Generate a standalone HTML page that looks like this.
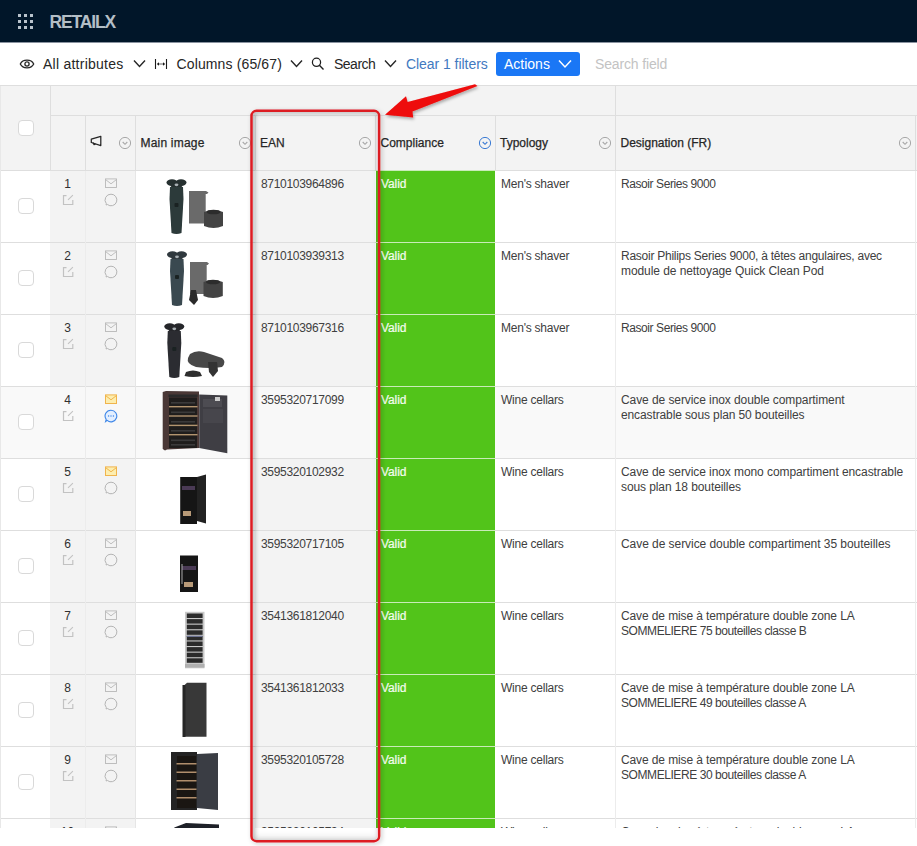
<!DOCTYPE html>
<html><head><meta charset="utf-8">
<style>
*{box-sizing:border-box;margin:0;padding:0}
html,body{width:917px;height:846px;overflow:hidden;background:#fff;font-family:"Liberation Sans",sans-serif;color:#3a3a3a}
.a{position:absolute}
#nav{left:0;top:0;width:917px;height:42px;background:#011629}
.dot{position:absolute;width:3px;height:3px;background:#b9c3cc}
#brand{left:49.5px;top:12px;font-size:17.5px;font-weight:bold;color:#b3bec6;letter-spacing:-1.15px;line-height:20px}
#tb{left:0;top:43px;width:917px;height:42px;background:#fff}
.tt{position:absolute;top:56px;font-size:14px;line-height:16px;color:#262626;white-space:nowrap}
#actions{left:496px;top:52px;width:84px;height:24px;background:#1a77f5;border-radius:3px}
.hdr{background:#f3f3f3}
.line{position:absolute;background:#dedede}
.ht{position:absolute;font-size:12px;line-height:15px;color:#262626;-webkit-text-stroke:0.25px #262626;white-space:nowrap}
.bt{position:absolute;font-size:12px;line-height:15px;color:#404040;white-space:nowrap}
.cb{position:absolute;width:16px;height:16px;border:1px solid #d9d9d9;border-radius:4px;background:#fff}
</style></head><body>
<div id="nav" class="a">
  <div class="dot" style="left:18px;top:14px"></div><div class="dot" style="left:24px;top:14px"></div><div class="dot" style="left:30px;top:14px"></div>
  <div class="dot" style="left:18px;top:20px"></div><div class="dot" style="left:24px;top:20px"></div><div class="dot" style="left:30px;top:20px"></div>
  <div class="dot" style="left:18px;top:26px"></div><div class="dot" style="left:24px;top:26px"></div><div class="dot" style="left:30px;top:26px"></div>
  <div id="brand" class="a">RETAILX</div>
</div>
<div id="tb" class="a"></div>
<div class="a" style="left:0;top:42px;width:917px;height:1px;background:#8a93a0"></div>

<!-- eye -->
<svg class="a" style="left:19px;top:58px" width="16" height="12" viewBox="0 0 16 12"><path d="M1.3 6 C3.8 0.9 12.2 0.9 14.7 6 C12.2 11.1 3.8 11.1 1.3 6Z" fill="none" stroke="#262626" stroke-width="1.3"/><circle cx="8" cy="6" r="2.1" fill="none" stroke="#262626" stroke-width="1.3"/></svg>
<div class="tt" style="left:43px;letter-spacing:0.25px">All attributes</div>
<svg class="a" style="left:133px;top:59px" width="13" height="9" viewBox="0 0 13 9"><path d="M1 1.5 L6.5 7.5 L12 1.5" fill="none" stroke="#262626" stroke-width="1.4"/></svg>
<!-- columns icon -->
<svg class="a" style="left:154px;top:57px" width="14" height="14" viewBox="0 0 14 14"><path d="M1.5 2 V12 M12.5 2 V12" fill="none" stroke="#1a1a1a" stroke-width="1.1"/><path d="M4.5 7 H9.5" stroke="#666" stroke-width="1"/><path d="M2.8 7 L5 5.2 V8.8Z M11.2 7 L9 5.2 V8.8Z" fill="#1a1a1a"/></svg>
<div class="tt" style="left:176.5px;letter-spacing:0.13px">Columns (65/67)</div>
<svg class="a" style="left:290px;top:59px" width="13" height="9" viewBox="0 0 13 9"><path d="M1 1.5 L6.5 7.5 L12 1.5" fill="none" stroke="#262626" stroke-width="1.4"/></svg>
<!-- search icon -->
<svg class="a" style="left:311px;top:56px" width="14" height="15" viewBox="0 0 14 15"><circle cx="5.5" cy="6.3" r="4.1" fill="none" stroke="#1e1e1e" stroke-width="1.25"/><path d="M8.4 9.3 L12.5 13.5" stroke="#1e1e1e" stroke-width="1.35"/></svg>
<div class="tt" style="left:334px;letter-spacing:-0.5px">Search</div>
<svg class="a" style="left:384px;top:59px" width="13" height="9" viewBox="0 0 13 9"><path d="M1 1.5 L6.5 7.5 L12 1.5" fill="none" stroke="#262626" stroke-width="1.4"/></svg>
<div class="tt" style="left:406px;color:#4279bf;letter-spacing:-0.05px">Clear 1 filters</div>
<div id="actions" class="a"></div>
<div class="tt" style="left:504px;color:#fff">Actions</div>
<svg class="a" style="left:558px;top:59px" width="14" height="10" viewBox="0 0 14 10"><path d="M1 1.5 L7 8 L13 1.5" fill="none" stroke="#fff" stroke-width="1.5"/></svg>
<div class="tt" style="left:595px;color:#c3c3c3;letter-spacing:-0.15px">Search field</div>

<!-- TABLE -->
<div class="a hdr" style="left:0;top:86px;width:917px;height:84px"></div>
<div class="line" style="left:0;top:85px;width:917px;height:1px"></div>
<div class="line" style="left:50px;top:115px;width:867px;height:1px"></div>
<div class="line" style="left:50px;top:85px;width:1px;height:85px"></div>
<div class="line" style="left:615px;top:85px;width:1px;height:85px"></div>
<div class="line" style="left:85px;top:115px;width:1px;height:55px"></div>
<div class="line" style="left:135px;top:115px;width:1px;height:55px"></div>
<div class="line" style="left:255px;top:115px;width:1px;height:55px"></div>
<div class="line" style="left:375px;top:115px;width:1px;height:55px"></div>
<div class="line" style="left:495px;top:115px;width:1px;height:55px"></div>
<div class="line" style="left:915px;top:115px;width:1px;height:55px"></div>
<div class="cb" style="left:18px;top:120px"></div>
<svg class="a" style="left:89px;top:135px" width="14" height="12" viewBox="0 0 14 12"><path d="M2.3 4.1 L11.8 1.3 V10.6 L2.3 7.5 Z" fill="none" stroke="#262626" stroke-width="1.25" stroke-linejoin="round"/><path d="M4 7.6 L4.9 9.6 L6.6 9.1" fill="none" stroke="#262626" stroke-width="1.1" stroke-linejoin="round"/></svg>
<svg class="a" style="left:118px;top:136px" width="14" height="14" viewBox="0 0 14 14"><circle cx="7" cy="7" r="5.6" fill="none" stroke="#a8a8a8" stroke-width="1"/><path d="M4.7 6 L7 8.3 L9.3 6" fill="none" stroke="#a8a8a8" stroke-width="1.1"/></svg>
<svg class="a" style="left:238px;top:136px" width="14" height="14" viewBox="0 0 14 14"><circle cx="7" cy="7" r="5.6" fill="none" stroke="#a8a8a8" stroke-width="1"/><path d="M4.7 6 L7 8.3 L9.3 6" fill="none" stroke="#a8a8a8" stroke-width="1.1"/></svg>
<svg class="a" style="left:358px;top:136px" width="14" height="14" viewBox="0 0 14 14"><circle cx="7" cy="7" r="5.6" fill="none" stroke="#a8a8a8" stroke-width="1"/><path d="M4.7 6 L7 8.3 L9.3 6" fill="none" stroke="#a8a8a8" stroke-width="1.1"/></svg>
<svg class="a" style="left:598px;top:136px" width="14" height="14" viewBox="0 0 14 14"><circle cx="7" cy="7" r="5.6" fill="none" stroke="#a8a8a8" stroke-width="1"/><path d="M4.7 6 L7 8.3 L9.3 6" fill="none" stroke="#a8a8a8" stroke-width="1.1"/></svg>
<svg class="a" style="left:898px;top:136px" width="14" height="14" viewBox="0 0 14 14"><circle cx="7" cy="7" r="5.6" fill="none" stroke="#a8a8a8" stroke-width="1"/><path d="M4.7 6 L7 8.3 L9.3 6" fill="none" stroke="#a8a8a8" stroke-width="1.1"/></svg>
<svg class="a" style="left:478px;top:136px" width="14" height="14" viewBox="0 0 14 14"><circle cx="7" cy="7" r="5.6" fill="none" stroke="#3b7bd4" stroke-width="1"/><path d="M4.7 6 L7 8.3 L9.3 6" fill="none" stroke="#3b7bd4" stroke-width="1.1"/></svg>
<div class="ht" style="left:140.5px;top:136px;letter-spacing:0.2px">Main image</div>
<div class="ht" style="left:260px;top:136px;letter-spacing:0px">EAN</div>
<div class="ht" style="left:380.5px;top:136px;letter-spacing:0px">Compliance</div>
<div class="ht" style="left:500px;top:136px;letter-spacing:0px">Typology</div>
<div class="ht" style="left:620.5px;top:136px;letter-spacing:0px">Designation (FR)</div>
<div class="a" style="left:50px;top:171px;width:85px;height:657px;background:#f3f3f3"></div>
<div class="a" style="left:255px;top:171px;width:120px;height:657px;background:#f3f3f3"></div>
<div class="a" style="left:376px;top:171px;width:119px;height:71px;background:#52c41a"></div>
<div class="a" style="left:376px;top:243px;width:119px;height:71px;background:#52c41a"></div>
<div class="a" style="left:376px;top:315px;width:119px;height:71px;background:#52c41a"></div>
<div class="a" style="left:0;top:387px;width:50px;height:71px;background:#f9f9f9"></div>
<div class="a" style="left:50px;top:387px;width:85px;height:71px;background:#f8f8f8"></div>
<div class="a" style="left:135px;top:387px;width:120px;height:71px;background:#f9f9f9"></div>
<div class="a" style="left:495px;top:387px;width:422px;height:71px;background:#f9f9f9"></div>
<div class="a" style="left:255px;top:387px;width:120px;height:71px;background:#f8f8f8"></div>
<div class="a" style="left:376px;top:387px;width:119px;height:71px;background:#52c41a"></div>
<div class="a" style="left:376px;top:459px;width:119px;height:71px;background:#52c41a"></div>
<div class="a" style="left:376px;top:531px;width:119px;height:71px;background:#52c41a"></div>
<div class="a" style="left:376px;top:603px;width:119px;height:71px;background:#52c41a"></div>
<div class="a" style="left:376px;top:675px;width:119px;height:71px;background:#52c41a"></div>
<div class="a" style="left:376px;top:747px;width:119px;height:71px;background:#52c41a"></div>
<div class="a" style="left:376px;top:819px;width:119px;height:71px;background:#52c41a"></div>
<div class="line" style="left:0;top:170px;width:917px;height:1px;background:#dedede"></div>
<div class="a" style="left:375px;top:170px;width:120px;height:1px;background:#c9ebb8"></div>
<div class="line" style="left:0;top:242px;width:917px;height:1px;background:#dedede"></div>
<div class="a" style="left:375px;top:242px;width:120px;height:1px;background:#c9ebb8"></div>
<div class="line" style="left:0;top:314px;width:917px;height:1px;background:#dedede"></div>
<div class="a" style="left:375px;top:314px;width:120px;height:1px;background:#c9ebb8"></div>
<div class="line" style="left:0;top:386px;width:917px;height:1px;background:#dedede"></div>
<div class="a" style="left:375px;top:386px;width:120px;height:1px;background:#c9ebb8"></div>
<div class="line" style="left:0;top:458px;width:917px;height:1px;background:#dedede"></div>
<div class="a" style="left:375px;top:458px;width:120px;height:1px;background:#c9ebb8"></div>
<div class="line" style="left:0;top:530px;width:917px;height:1px;background:#dedede"></div>
<div class="a" style="left:375px;top:530px;width:120px;height:1px;background:#c9ebb8"></div>
<div class="line" style="left:0;top:602px;width:917px;height:1px;background:#dedede"></div>
<div class="a" style="left:375px;top:602px;width:120px;height:1px;background:#c9ebb8"></div>
<div class="line" style="left:0;top:674px;width:917px;height:1px;background:#dedede"></div>
<div class="a" style="left:375px;top:674px;width:120px;height:1px;background:#c9ebb8"></div>
<div class="line" style="left:0;top:746px;width:917px;height:1px;background:#dedede"></div>
<div class="a" style="left:375px;top:746px;width:120px;height:1px;background:#c9ebb8"></div>
<div class="line" style="left:0;top:818px;width:917px;height:1px;background:#dedede"></div>
<div class="a" style="left:375px;top:818px;width:120px;height:1px;background:#c9ebb8"></div>
<div class="line" style="left:0;top:86px;width:1px;height:742px;background:#e8e8e8"></div>
<div class="line" style="left:85px;top:171px;width:1px;height:657px;background:#ececec"></div>
<div class="line" style="left:615px;top:171px;width:1px;height:657px;background:#ececec"></div>
<div class="line" style="left:915px;top:171px;width:1px;height:657px;background:#ececec"></div>
<div class="line" style="left:135px;top:171px;width:1px;height:657px;background:#e6e6e6"></div>
<div class="cb" style="left:18px;top:198px"></div>
<div class="bt" style="left:50px;width:35px;text-align:center;top:177px;color:#303030">1</div>
<svg class="a" style="left:62px;top:194px" width="12" height="12" viewBox="0 0 12 12"><path d="M4.5 1.6 H1.5 V10.5 H10.8 V6" fill="none" stroke="#c2c2c2" stroke-width="1.2"/><path d="M6 5.8 L10.9 1.2" stroke="#c2c2c2" stroke-width="1.1"/></svg>
<svg class="a" style="left:104px;top:178px" width="14" height="11" viewBox="0 0 14 11"><rect x="1.5" y="0.9" width="11" height="8.6" fill="none" stroke="#b8b8b8" stroke-width="0.9"/><path d="M1.5 1.5 L7 5.8 L12.5 1.5" fill="none" stroke="#b8b8b8" stroke-width="0.9"/></svg>
<svg class="a" style="left:104px;top:192.5px" width="14" height="14" viewBox="0 0 14 14"><path d="M7 1.2 A5.8 5.8 0 1 1 3.4 11.5 L2.1 12 L2.3 10.6 A5.8 5.8 0 0 1 7 1.2Z" fill="none" stroke="#b4b4b4" stroke-width="1"/></svg>
<div class="bt" style="left:261px;top:177px;letter-spacing:-0.3px">8710103964896</div>
<div class="bt" style="left:381px;top:177px;color:#f5fcf0;letter-spacing:-0.1px;-webkit-text-stroke:0.2px #f5fcf0">Valid</div>
<div class="bt" style="left:501px;top:177px;letter-spacing:-0.23px">Men's shaver</div>
<div class="bt" style="left:621px;top:177px;letter-spacing:-0.42px">Rasoir Series 9000</div>
<svg class="a" style="left:0;top:0" width="917" height="846" viewBox="0 0 917 846"><ellipse cx="172.0" cy="182.6" rx="5.5" ry="3.4" fill="#263030"/><ellipse cx="181.0" cy="182.6" rx="5.5" ry="3.4" fill="#263030"/><ellipse cx="176.5" cy="185" rx="6" ry="3.8" fill="#263030"/><ellipse cx="176.5" cy="184.8" rx="1.9" ry="1.4" fill="#a9b0b4"/><path d="M170.0 187 L183.0 187 L183.5 199 L181.5 233 Q176.5 235 171.5 233 L169.5 199 Z" fill="#2c3a3a"/><rect x="174.5" y="203" width="4" height="4" rx="1" fill="#1a2222"/><path d="M189 191 H206 L208.5 192.5 L207 194 H205.7 V223.6 H189 Z" fill="#6a6a6a"/><path d="M204 212 Q213.5 208 223 212 V226 Q213.5 230 204 226 Z" fill="#434343"/><ellipse cx="213.5" cy="212" rx="7" ry="2.3" fill="#2c2c2c"/></svg>
<div class="cb" style="left:18px;top:270px"></div>
<div class="bt" style="left:50px;width:35px;text-align:center;top:249px;color:#303030">2</div>
<svg class="a" style="left:62px;top:266px" width="12" height="12" viewBox="0 0 12 12"><path d="M4.5 1.6 H1.5 V10.5 H10.8 V6" fill="none" stroke="#c2c2c2" stroke-width="1.2"/><path d="M6 5.8 L10.9 1.2" stroke="#c2c2c2" stroke-width="1.1"/></svg>
<svg class="a" style="left:104px;top:250px" width="14" height="11" viewBox="0 0 14 11"><rect x="1.5" y="0.9" width="11" height="8.6" fill="none" stroke="#b8b8b8" stroke-width="0.9"/><path d="M1.5 1.5 L7 5.8 L12.5 1.5" fill="none" stroke="#b8b8b8" stroke-width="0.9"/></svg>
<svg class="a" style="left:104px;top:264.5px" width="14" height="14" viewBox="0 0 14 14"><path d="M7 1.2 A5.8 5.8 0 1 1 3.4 11.5 L2.1 12 L2.3 10.6 A5.8 5.8 0 0 1 7 1.2Z" fill="none" stroke="#b4b4b4" stroke-width="1"/></svg>
<div class="bt" style="left:261px;top:249px;letter-spacing:-0.3px">8710103939313</div>
<div class="bt" style="left:381px;top:249px;color:#f5fcf0;letter-spacing:-0.1px;-webkit-text-stroke:0.2px #f5fcf0">Valid</div>
<div class="bt" style="left:501px;top:249px;letter-spacing:-0.23px">Men's shaver</div>
<div class="bt" style="left:621px;top:249px;letter-spacing:-0.256px">Rasoir Philips Series 9000, à têtes angulaires, avec</div>
<div class="bt" style="left:621px;top:264px;letter-spacing:-0.073px">module de nettoyage Quick Clean Pod</div>
<svg class="a" style="left:0;top:0" width="917" height="846" viewBox="0 0 917 846"><ellipse cx="172.5" cy="254.6" rx="5.5" ry="3.4" fill="#30393e"/><ellipse cx="181.5" cy="254.6" rx="5.5" ry="3.4" fill="#30393e"/><ellipse cx="177" cy="257" rx="6" ry="3.8" fill="#30393e"/><ellipse cx="177" cy="256.8" rx="1.9" ry="1.4" fill="#a9b0b4"/><path d="M170.5 259 L183.5 259 L184 271 L182 305 Q177 307 172 305 L170 271 Z" fill="#3a4950"/><rect x="175" y="275" width="4" height="4" rx="1" fill="#1a2222"/><path d="M190 262 H207 L209 263.5 L207.5 265 H206.7 V294 H190 Z" fill="#6a6a6a"/><path d="M203.5 282 Q213 278 222.8 282 V296 Q213 300 203.5 296 Z" fill="#434343"/><ellipse cx="213" cy="282" rx="7" ry="2.3" fill="#2c2c2c"/><path d="M191 290 H196 L198 300 L194 305 L189 300 Z" fill="#2a2a2a"/></svg>
<div class="cb" style="left:18px;top:342px"></div>
<div class="bt" style="left:50px;width:35px;text-align:center;top:321px;color:#303030">3</div>
<svg class="a" style="left:62px;top:338px" width="12" height="12" viewBox="0 0 12 12"><path d="M4.5 1.6 H1.5 V10.5 H10.8 V6" fill="none" stroke="#c2c2c2" stroke-width="1.2"/><path d="M6 5.8 L10.9 1.2" stroke="#c2c2c2" stroke-width="1.1"/></svg>
<svg class="a" style="left:104px;top:322px" width="14" height="11" viewBox="0 0 14 11"><rect x="1.5" y="0.9" width="11" height="8.6" fill="none" stroke="#b8b8b8" stroke-width="0.9"/><path d="M1.5 1.5 L7 5.8 L12.5 1.5" fill="none" stroke="#b8b8b8" stroke-width="0.9"/></svg>
<svg class="a" style="left:104px;top:336.5px" width="14" height="14" viewBox="0 0 14 14"><path d="M7 1.2 A5.8 5.8 0 1 1 3.4 11.5 L2.1 12 L2.3 10.6 A5.8 5.8 0 0 1 7 1.2Z" fill="none" stroke="#b4b4b4" stroke-width="1"/></svg>
<div class="bt" style="left:261px;top:321px;letter-spacing:-0.3px">8710103967316</div>
<div class="bt" style="left:381px;top:321px;color:#f5fcf0;letter-spacing:-0.1px;-webkit-text-stroke:0.2px #f5fcf0">Valid</div>
<div class="bt" style="left:501px;top:321px;letter-spacing:-0.23px">Men's shaver</div>
<div class="bt" style="left:621px;top:321px;letter-spacing:-0.42px">Rasoir Series 9000</div>
<svg class="a" style="left:0;top:0" width="917" height="846" viewBox="0 0 917 846"><ellipse cx="169.8" cy="326.6" rx="5.5" ry="3.4" fill="#25262a"/><ellipse cx="178.8" cy="326.6" rx="5.5" ry="3.4" fill="#25262a"/><ellipse cx="174.3" cy="329" rx="6" ry="3.8" fill="#25262a"/><ellipse cx="174.3" cy="328.8" rx="1.9" ry="1.4" fill="#a9b0b4"/><path d="M167.8 331 L180.8 331 L181.3 343 L179.3 377 Q174.3 379 169.3 377 L167.3 343 Z" fill="#2b2c31"/><rect x="172.3" y="347" width="4" height="4" rx="1" fill="#1a2222"/><path d="M190 354 Q196 350 204 352 L222 358 Q227 362 222 367 Q210 369 196 367 Q186 364 188 358Z" fill="#484848"/><path d="M208 362 H217 L218 371 L213 377 L209 372Z" fill="#333"/><path d="M186 372 Q193 369 200 372 L202 376 Q193 378 184.5 376Z" fill="#2e2e2e"/></svg>
<div class="cb" style="left:18px;top:414px"></div>
<div class="bt" style="left:50px;width:35px;text-align:center;top:393px;color:#303030">4</div>
<svg class="a" style="left:62px;top:410px" width="12" height="12" viewBox="0 0 12 12"><path d="M4.5 1.6 H1.5 V10.5 H10.8 V6" fill="none" stroke="#c2c2c2" stroke-width="1.2"/><path d="M6 5.8 L10.9 1.2" stroke="#c2c2c2" stroke-width="1.1"/></svg>
<svg class="a" style="left:104px;top:394px" width="14" height="11" viewBox="0 0 14 11"><rect x="1.5" y="0.9" width="11" height="8.6" fill="#fdeeb0" stroke="#f0b44c" stroke-width="1"/><path d="M1.5 1.5 L7 5.8 L12.5 1.5" fill="none" stroke="#f0b44c" stroke-width="1"/></svg>
<svg class="a" style="left:104px;top:408.5px" width="14" height="14" viewBox="0 0 14 14"><path d="M7 1.2 A5.8 5.8 0 1 1 3.2 11.4 L1.6 12.6 L2.2 10.4 A5.8 5.8 0 0 1 7 1.2Z" fill="#e3efff" stroke="#3d86e8" stroke-width="1.1"/><circle cx="4.6" cy="7" r="0.7" fill="#3d86e8"/><circle cx="7" cy="7" r="0.7" fill="#3d86e8"/><circle cx="9.4" cy="7" r="0.7" fill="#3d86e8"/></svg>
<div class="bt" style="left:261px;top:393px;letter-spacing:-0.3px">3595320717099</div>
<div class="bt" style="left:381px;top:393px;color:#f5fcf0;letter-spacing:-0.1px;-webkit-text-stroke:0.2px #f5fcf0">Valid</div>
<div class="bt" style="left:501px;top:393px;letter-spacing:-0.23px">Wine cellars</div>
<div class="bt" style="left:621px;top:393px;letter-spacing:-0.081px">Cave de service inox double compartiment</div>
<div class="bt" style="left:621px;top:408px;letter-spacing:-0.116px">encastrable sous plan 50 bouteilles</div>
<svg class="a" style="left:0;top:0" width="917" height="846" viewBox="0 0 917 846"><path d="M162.7 392 L166 391 L199 391.5 L199 448 L167 449.5 L165 450.6 L162.7 449Z" fill="#4a3836"/><rect x="168.5" y="394.5" width="29" height="2.5" fill="#2a2a2a"/><rect x="169" y="397.5" width="28" height="50.5" fill="#1f1d1c"/><rect x="169" y="406" width="28.5" height="1.4" fill="#b3956f"/><rect x="169" y="415.3" width="28.5" height="1.4" fill="#b3956f"/><rect x="169" y="424.7" width="28.5" height="1.4" fill="#b3956f"/><rect x="169" y="434" width="28.5" height="1.4" fill="#b3956f"/><rect x="171" y="402" width="24" height="1.6" fill="#3b3a3a"/><rect x="171" y="411.5" width="24" height="1.6" fill="#3b3a3a"/><rect x="171" y="421" width="24" height="1.6" fill="#3b3a3a"/><rect x="171" y="430" width="24" height="1.6" fill="#3b3a3a"/><rect x="171" y="439.5" width="24" height="1.6" fill="#3b3a3a"/><rect x="171" y="444" width="24" height="1.6" fill="#3b3a3a"/><path d="M199.2 394.5 L227.3 395.5 L227.3 453.2 L199.2 448Z" fill="#3f3e44"/><rect x="203" y="399" width="19" height="8" fill="#4d4c52"/><rect x="215" y="397" width="5" height="4" fill="#ccc"/><rect x="203" y="409" width="20" height="14" fill="#47464c"/></svg>
<div class="cb" style="left:18px;top:486px"></div>
<div class="bt" style="left:50px;width:35px;text-align:center;top:465px;color:#303030">5</div>
<svg class="a" style="left:62px;top:482px" width="12" height="12" viewBox="0 0 12 12"><path d="M4.5 1.6 H1.5 V10.5 H10.8 V6" fill="none" stroke="#c2c2c2" stroke-width="1.2"/><path d="M6 5.8 L10.9 1.2" stroke="#c2c2c2" stroke-width="1.1"/></svg>
<svg class="a" style="left:104px;top:466px" width="14" height="11" viewBox="0 0 14 11"><rect x="1.5" y="0.9" width="11" height="8.6" fill="#fdeeb0" stroke="#f0b44c" stroke-width="1"/><path d="M1.5 1.5 L7 5.8 L12.5 1.5" fill="none" stroke="#f0b44c" stroke-width="1"/></svg>
<svg class="a" style="left:104px;top:480.5px" width="14" height="14" viewBox="0 0 14 14"><path d="M7 1.2 A5.8 5.8 0 1 1 3.4 11.5 L2.1 12 L2.3 10.6 A5.8 5.8 0 0 1 7 1.2Z" fill="none" stroke="#b4b4b4" stroke-width="1"/></svg>
<div class="bt" style="left:261px;top:465px;letter-spacing:-0.3px">3595320102932</div>
<div class="bt" style="left:381px;top:465px;color:#f5fcf0;letter-spacing:-0.1px;-webkit-text-stroke:0.2px #f5fcf0">Valid</div>
<div class="bt" style="left:501px;top:465px;letter-spacing:-0.23px">Wine cellars</div>
<div class="bt" style="left:621px;top:465px;letter-spacing:-0.081px">Cave de service inox mono compartiment encastrable</div>
<div class="bt" style="left:621px;top:480px;letter-spacing:-0.095px">sous plan 18 bouteilles</div>
<svg class="a" style="left:0;top:0" width="917" height="846" viewBox="0 0 917 846"><rect x="180.2" y="477" width="16.8" height="47" fill="#151515"/><rect x="182" y="486" width="13" height="4" fill="#4a3a55"/><rect x="183" y="511" width="8" height="5" fill="#b89a78"/><path d="M197 477 L206 474.5 L206 523.5 L197 521Z" fill="#222"/></svg>
<div class="cb" style="left:18px;top:558px"></div>
<div class="bt" style="left:50px;width:35px;text-align:center;top:537px;color:#303030">6</div>
<svg class="a" style="left:62px;top:554px" width="12" height="12" viewBox="0 0 12 12"><path d="M4.5 1.6 H1.5 V10.5 H10.8 V6" fill="none" stroke="#c2c2c2" stroke-width="1.2"/><path d="M6 5.8 L10.9 1.2" stroke="#c2c2c2" stroke-width="1.1"/></svg>
<svg class="a" style="left:104px;top:538px" width="14" height="11" viewBox="0 0 14 11"><rect x="1.5" y="0.9" width="11" height="8.6" fill="none" stroke="#b8b8b8" stroke-width="0.9"/><path d="M1.5 1.5 L7 5.8 L12.5 1.5" fill="none" stroke="#b8b8b8" stroke-width="0.9"/></svg>
<svg class="a" style="left:104px;top:552.5px" width="14" height="14" viewBox="0 0 14 14"><path d="M7 1.2 A5.8 5.8 0 1 1 3.4 11.5 L2.1 12 L2.3 10.6 A5.8 5.8 0 0 1 7 1.2Z" fill="none" stroke="#b4b4b4" stroke-width="1"/></svg>
<div class="bt" style="left:261px;top:537px;letter-spacing:-0.3px">3595320717105</div>
<div class="bt" style="left:381px;top:537px;color:#f5fcf0;letter-spacing:-0.1px;-webkit-text-stroke:0.2px #f5fcf0">Valid</div>
<div class="bt" style="left:501px;top:537px;letter-spacing:-0.23px">Wine cellars</div>
<div class="bt" style="left:621px;top:537px;letter-spacing:-0.055px">Cave de service double compartiment 35 bouteilles</div>
<svg class="a" style="left:0;top:0" width="917" height="846" viewBox="0 0 917 846"><rect x="180" y="555.5" width="18" height="36.5" fill="#151515"/><rect x="182" y="566" width="14" height="4" fill="#4a3a55"/><rect x="181.5" y="564" width="1" height="20" fill="#aaa"/><rect x="184" y="582" width="9" height="5" fill="#b89a78"/></svg>
<div class="cb" style="left:18px;top:630px"></div>
<div class="bt" style="left:50px;width:35px;text-align:center;top:609px;color:#303030">7</div>
<svg class="a" style="left:62px;top:626px" width="12" height="12" viewBox="0 0 12 12"><path d="M4.5 1.6 H1.5 V10.5 H10.8 V6" fill="none" stroke="#c2c2c2" stroke-width="1.2"/><path d="M6 5.8 L10.9 1.2" stroke="#c2c2c2" stroke-width="1.1"/></svg>
<svg class="a" style="left:104px;top:610px" width="14" height="11" viewBox="0 0 14 11"><rect x="1.5" y="0.9" width="11" height="8.6" fill="none" stroke="#b8b8b8" stroke-width="0.9"/><path d="M1.5 1.5 L7 5.8 L12.5 1.5" fill="none" stroke="#b8b8b8" stroke-width="0.9"/></svg>
<svg class="a" style="left:104px;top:624.5px" width="14" height="14" viewBox="0 0 14 14"><path d="M7 1.2 A5.8 5.8 0 1 1 3.4 11.5 L2.1 12 L2.3 10.6 A5.8 5.8 0 0 1 7 1.2Z" fill="none" stroke="#b4b4b4" stroke-width="1"/></svg>
<div class="bt" style="left:261px;top:609px;letter-spacing:-0.3px">3541361812040</div>
<div class="bt" style="left:381px;top:609px;color:#f5fcf0;letter-spacing:-0.1px;-webkit-text-stroke:0.2px #f5fcf0">Valid</div>
<div class="bt" style="left:501px;top:609px;letter-spacing:-0.23px">Wine cellars</div>
<div class="bt" style="left:621px;top:609px;letter-spacing:-0.111px">Cave de mise à température double zone LA</div>
<div class="bt" style="left:621px;top:624px;letter-spacing:-0.425px">SOMMELIERE 75 bouteilles classe B</div>
<svg class="a" style="left:0;top:0" width="917" height="846" viewBox="0 0 917 846"><rect x="185" y="611.8" width="19.5" height="56.5" fill="#c9c9c9"/><rect x="186.8" y="613.5" width="15.8" height="4.5" fill="#2b2b2b"/><rect x="186.8" y="619.1" width="15.8" height="4.5" fill="#2b2b2b"/><rect x="186.8" y="624.7" width="15.8" height="4.5" fill="#2b2b2b"/><rect x="186.8" y="630.3" width="15.8" height="4.5" fill="#2b2b2b"/><rect x="186.8" y="635.9" width="15.8" height="4.5" fill="#2b2b2b"/><rect x="186.8" y="641.5" width="15.8" height="4.5" fill="#2b2b2b"/><rect x="186.8" y="647.1" width="15.8" height="4.5" fill="#2b2b2b"/><rect x="186.8" y="652.7" width="15.8" height="4.5" fill="#2b2b2b"/><rect x="186.8" y="658.3" width="15.8" height="4.5" fill="#2b2b2b"/><rect x="186.8" y="635.8" width="15.8" height="1.2" fill="#6a7090"/><rect x="185" y="664" width="19.5" height="3.5" fill="#b0b0b0"/></svg>
<div class="cb" style="left:18px;top:702px"></div>
<div class="bt" style="left:50px;width:35px;text-align:center;top:681px;color:#303030">8</div>
<svg class="a" style="left:62px;top:698px" width="12" height="12" viewBox="0 0 12 12"><path d="M4.5 1.6 H1.5 V10.5 H10.8 V6" fill="none" stroke="#c2c2c2" stroke-width="1.2"/><path d="M6 5.8 L10.9 1.2" stroke="#c2c2c2" stroke-width="1.1"/></svg>
<svg class="a" style="left:104px;top:682px" width="14" height="11" viewBox="0 0 14 11"><rect x="1.5" y="0.9" width="11" height="8.6" fill="none" stroke="#b8b8b8" stroke-width="0.9"/><path d="M1.5 1.5 L7 5.8 L12.5 1.5" fill="none" stroke="#b8b8b8" stroke-width="0.9"/></svg>
<svg class="a" style="left:104px;top:696.5px" width="14" height="14" viewBox="0 0 14 14"><path d="M7 1.2 A5.8 5.8 0 1 1 3.4 11.5 L2.1 12 L2.3 10.6 A5.8 5.8 0 0 1 7 1.2Z" fill="none" stroke="#b4b4b4" stroke-width="1"/></svg>
<div class="bt" style="left:261px;top:681px;letter-spacing:-0.3px">3541361812033</div>
<div class="bt" style="left:381px;top:681px;color:#f5fcf0;letter-spacing:-0.1px;-webkit-text-stroke:0.2px #f5fcf0">Valid</div>
<div class="bt" style="left:501px;top:681px;letter-spacing:-0.23px">Wine cellars</div>
<div class="bt" style="left:621px;top:681px;letter-spacing:-0.111px">Cave de mise à température double zone LA</div>
<div class="bt" style="left:621px;top:696px;letter-spacing:-0.425px">SOMMELIERE 49 bouteilles classe A</div>
<svg class="a" style="left:0;top:0" width="917" height="846" viewBox="0 0 917 846"><path d="M184 685.5 L187 682.7 L206.5 682.7 L206.5 736.8 L184 736.8Z" fill="#383838"/><rect x="182.5" y="685" width="3" height="52" fill="#262626"/></svg>
<div class="cb" style="left:18px;top:774px"></div>
<div class="bt" style="left:50px;width:35px;text-align:center;top:753px;color:#303030">9</div>
<svg class="a" style="left:62px;top:770px" width="12" height="12" viewBox="0 0 12 12"><path d="M4.5 1.6 H1.5 V10.5 H10.8 V6" fill="none" stroke="#c2c2c2" stroke-width="1.2"/><path d="M6 5.8 L10.9 1.2" stroke="#c2c2c2" stroke-width="1.1"/></svg>
<svg class="a" style="left:104px;top:754px" width="14" height="11" viewBox="0 0 14 11"><rect x="1.5" y="0.9" width="11" height="8.6" fill="none" stroke="#b8b8b8" stroke-width="0.9"/><path d="M1.5 1.5 L7 5.8 L12.5 1.5" fill="none" stroke="#b8b8b8" stroke-width="0.9"/></svg>
<svg class="a" style="left:104px;top:768.5px" width="14" height="14" viewBox="0 0 14 14"><path d="M7 1.2 A5.8 5.8 0 1 1 3.4 11.5 L2.1 12 L2.3 10.6 A5.8 5.8 0 0 1 7 1.2Z" fill="none" stroke="#b4b4b4" stroke-width="1"/></svg>
<div class="bt" style="left:261px;top:753px;letter-spacing:-0.3px">3595320105728</div>
<div class="bt" style="left:381px;top:753px;color:#f5fcf0;letter-spacing:-0.1px;-webkit-text-stroke:0.2px #f5fcf0">Valid</div>
<div class="bt" style="left:501px;top:753px;letter-spacing:-0.23px">Wine cellars</div>
<div class="bt" style="left:621px;top:753px;letter-spacing:-0.111px">Cave de mise à température double zone LA</div>
<div class="bt" style="left:621px;top:768px;letter-spacing:-0.425px">SOMMELIERE 30 bouteilles classe A</div>
<svg class="a" style="left:0;top:0" width="917" height="846" viewBox="0 0 917 846"><rect x="171" y="752" width="26" height="58" fill="#242424"/><rect x="177" y="756" width="19" height="52" fill="#1a1612"/><rect x="176.5" y="763" width="20" height="1.5" fill="#b08e6c"/><rect x="176.5" y="771.5" width="20" height="1.5" fill="#b08e6c"/><rect x="176.5" y="780" width="20" height="1.5" fill="#b08e6c"/><rect x="176.5" y="788.5" width="20" height="1.5" fill="#b08e6c"/><rect x="176.5" y="797" width="20" height="1.5" fill="#b08e6c"/><path d="M197 754 L218 753 L218 810 L197 808Z" fill="#3a3d44"/></svg>
<div class="cb" style="left:18px;top:846px"></div>
<div class="bt" style="left:50px;width:35px;text-align:center;top:825px;color:#303030">10</div>
<svg class="a" style="left:62px;top:842px" width="12" height="12" viewBox="0 0 12 12"><path d="M4.5 1.6 H1.5 V10.5 H10.8 V6" fill="none" stroke="#c2c2c2" stroke-width="1.2"/><path d="M6 5.8 L10.9 1.2" stroke="#c2c2c2" stroke-width="1.1"/></svg>
<svg class="a" style="left:104px;top:826px" width="14" height="11" viewBox="0 0 14 11"><rect x="1.5" y="0.9" width="11" height="8.6" fill="none" stroke="#b8b8b8" stroke-width="0.9"/><path d="M1.5 1.5 L7 5.8 L12.5 1.5" fill="none" stroke="#b8b8b8" stroke-width="0.9"/></svg>
<svg class="a" style="left:104px;top:840.5px" width="14" height="14" viewBox="0 0 14 14"><path d="M7 1.2 A5.8 5.8 0 1 1 3.4 11.5 L2.1 12 L2.3 10.6 A5.8 5.8 0 0 1 7 1.2Z" fill="none" stroke="#b4b4b4" stroke-width="1"/></svg>
<div class="bt" style="left:261px;top:825px;letter-spacing:-0.3px">3595320105734</div>
<div class="bt" style="left:381px;top:825px;color:#f5fcf0;letter-spacing:-0.1px;-webkit-text-stroke:0.2px #f5fcf0">Valid</div>
<div class="bt" style="left:501px;top:825px;letter-spacing:-0.23px">Wine cellars</div>
<div class="bt" style="left:621px;top:825px;letter-spacing:-0.111px">Cave de mise à température double zone LA</div>
<svg class="a" style="left:0;top:0" width="917" height="846" viewBox="0 0 917 846"><path d="M174.3 827.5 L186 823 L219 824.5 V828 H174.3Z" fill="#1e2128"/></svg>
<div class="a" style="left:0;top:828px;width:917px;height:18px;background:#fff"></div>
<div class="a" style="left:253px;top:112px;width:124px;height:728px;border-radius:3px;box-shadow:inset 2px 0 5px rgba(0,0,0,0.10), inset 0 -4px 6px rgba(0,0,0,0.08)"></div>
<svg class="a" style="left:0;top:0" width="917" height="846" viewBox="0 0 917 846"><defs><filter id="sh" x="-20%" y="-5%" width="140%" height="110%"><feDropShadow dx="1.5" dy="1.5" stdDeviation="2" flood-color="#000" flood-opacity="0.25"/></filter></defs><rect x="251.5" y="110.8" width="127.6" height="730.4" rx="5" fill="none" stroke="#dd1c24" stroke-width="2.5" filter="url(#sh)"/></svg>
<svg class="a" style="left:0;top:0" width="917" height="846" viewBox="0 0 917 846"><defs><filter id="sh2" x="-20%" y="-20%" width="140%" height="160%"><feDropShadow dx="1" dy="2" stdDeviation="1.8" flood-color="#000" flood-opacity="0.3"/></filter></defs><path d="M385 114.7 L406 96.3 L407.6 102 L475 84.2 L477.5 86 L412.5 111.5 L413.2 117.5 Z" fill="#ee0a0a" filter="url(#sh2)"/></svg>
</body></html>
